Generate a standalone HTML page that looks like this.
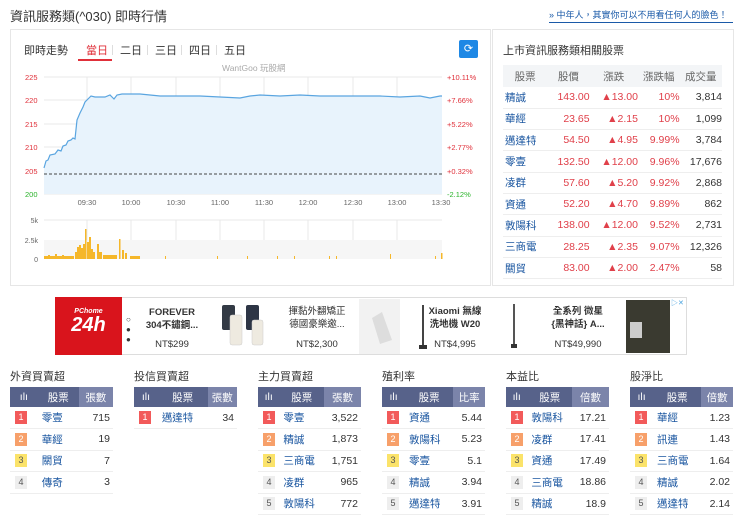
<!DOCTYPE html>
<html><head><meta charset="utf-8">
<style>
*{margin:0;padding:0;box-sizing:border-box}
body{width:740px;height:520px;background:#fff;font-family:"Liberation Sans","Noto Sans CJK TC",sans-serif;color:#333;position:relative;overflow:hidden;font-size:11px}
.abs{position:absolute}
.title{left:10px;top:6px;font-size:13px;color:#333}
.link{left:549px;top:8px;font-size:9px;color:#1a5aa8;border-bottom:1px solid #1a5aa8;padding-bottom:1px;white-space:nowrap;width:184px}
.box{border:1px solid #e6e6e6}
.tab{top:42px;font-size:11px;color:#333}
table{border-collapse:collapse}
.rt{left:503px;top:65px;width:219px;font-size:10.5px}
.rt th{background:#f3f5f7;color:#666;font-weight:normal;height:22px;text-align:center}
.rt td{height:21.3px;border-bottom:1px solid #eee;color:#e0404a;text-align:right}
.rt td:first-child{color:#1a56a0;text-align:left;padding-left:2px}
.rt td:last-child{color:#333}
.bt{width:103px;font-size:10.5px}
.bt th{background:#57628a;color:#fff;font-weight:normal;height:20px}
.bt th.l{background:#7b84aa}
.bt td{height:21.5px;border-bottom:1px solid #eee}
.bt td.n{color:#1a56a0;padding-left:4px}
.bt td.v{text-align:right;padding-right:3px}
.bg{display:inline-block;width:12px;height:13px;line-height:13px;text-align:center;color:#fff;font-size:9px;margin-left:5px}
.b1{background:#f25a5a}.b2{background:#f7a06a}.b3{background:#fbe36a;color:#555}.b4{background:#eee;color:#555}
.st{font-size:11px;color:#333}
</style></head><body>
<div class="abs title">資訊服務類(^030) 即時行情</div>
<div class="abs link">» 中年人，其實你可以不用看任何人的臉色！</div>

<div class="abs box" style="left:10px;top:29px;width:481px;height:257px"></div>
<div class="abs box" style="left:492px;top:29px;width:242px;height:257px"></div>

<div class="abs tab" style="left:24px">即時走勢</div>
<div class="abs tab" style="left:86px;color:#e0303a">當日</div>
<div class="abs" style="left:78px;top:59px;width:34px;height:2px;background:#e0303a"></div>
<div class="abs tab" style="left:120px">二日</div>
<div class="abs tab" style="left:155px">三日</div>
<div class="abs tab" style="left:189px">四日</div>
<div class="abs tab" style="left:224px">五日</div>
<div class="abs" style="left:112px;top:45px;width:1px;height:10px;background:#ddd"></div>
<div class="abs" style="left:147px;top:45px;width:1px;height:10px;background:#ddd"></div>
<div class="abs" style="left:181px;top:45px;width:1px;height:10px;background:#ddd"></div>
<div class="abs" style="left:216px;top:45px;width:1px;height:10px;background:#ddd"></div>
<div class="abs" style="left:459px;top:40px;width:19px;height:18px;background:#1e88e5;border-radius:2px;color:#fff;font-size:11px;text-align:center;line-height:18px">⟳</div>
<div class="abs" style="left:222px;top:62px;font-size:8.5px;color:#aaa">WantGoo 玩股網</div>

<svg class="abs" style="left:0;top:0" width="490" height="285">
<g stroke="#e8e8e8" stroke-width="1">
<line x1="44" y1="77" x2="442" y2="77"/><line x1="44" y1="100" x2="442" y2="100"/><line x1="44" y1="124" x2="442" y2="124"/><line x1="44" y1="147" x2="442" y2="147"/><line x1="44" y1="171" x2="442" y2="171"/><line x1="44" y1="194" x2="442" y2="194"/>
<line x1="87" y1="77" x2="87" y2="194"/><line x1="131" y1="77" x2="131" y2="194"/><line x1="176" y1="77" x2="176" y2="194"/><line x1="220" y1="77" x2="220" y2="194"/><line x1="264" y1="77" x2="264" y2="194"/><line x1="308" y1="77" x2="308" y2="194"/><line x1="353" y1="77" x2="353" y2="194"/><line x1="397" y1="77" x2="397" y2="194"/>
<line x1="87" y1="220" x2="87" y2="259"/><line x1="131" y1="220" x2="131" y2="259"/><line x1="176" y1="220" x2="176" y2="259"/><line x1="220" y1="220" x2="220" y2="259"/><line x1="264" y1="220" x2="264" y2="259"/><line x1="308" y1="220" x2="308" y2="259"/><line x1="353" y1="220" x2="353" y2="259"/><line x1="397" y1="220" x2="397" y2="259"/>
<line x1="44" y1="220" x2="442" y2="220"/>
</g>
<rect x="44" y="240" width="398" height="19" fill="#f6f6f6"/>
<path d="M44,168 L46,161 48,160 50,155 55,154 58,150 61,151 63,146 66,145 68,141 71,140 73,138 75,139 77,120 80,113 83,107 85,102 88,99 91,96 95,97 100,97 105,97 110,95 114,99 117,95 122,94 130,94 140,94 150,95 160,96 180,96 200,96 220,97 240,98 250,96 260,95 280,96 300,95 320,96 340,96 360,96 380,96 400,97 420,96 430,98 440,96 L442,96 L442,194 L44,194 Z" fill="#e8f3fc"/>
<path d="M44,168 L46,161 48,160 50,155 55,154 58,150 61,151 63,146 66,145 68,141 71,140 73,138 75,139 77,120 80,113 83,107 85,102 88,99 91,96 95,97 100,97 105,97 110,95 114,99 117,95 122,94 130,94 140,94 150,95 160,96 180,96 200,96 220,97 240,98 250,96 260,95 280,96 300,95 320,96 340,96 360,96 380,96 400,97 420,96 430,98 440,96 442,96" fill="none" stroke="#5aa5e0" stroke-width="1.2"/>
<line x1="44" y1="174" x2="442" y2="174" stroke="#444" stroke-dasharray="3,2"/>
<g fill="#f5b72a">
<rect x="44" y="256" width="30" height="3"/><rect x="48" y="255" width="2" height="4"/><rect x="55" y="254" width="2" height="5"/><rect x="62" y="255" width="2" height="4"/>
<rect x="75" y="252" width="2" height="7"/><rect x="77" y="247" width="2" height="12"/><rect x="79" y="245" width="2" height="14"/><rect x="81" y="248" width="2" height="11"/><rect x="83" y="244" width="2" height="15"/><rect x="85" y="229" width="1.5" height="30"/><rect x="87" y="242" width="2" height="17"/><rect x="89" y="237" width="2" height="22"/><rect x="91" y="249" width="2" height="10"/><rect x="93" y="252" width="2" height="7"/><rect x="97" y="244" width="2" height="15"/><rect x="99" y="252" width="3" height="7"/><rect x="103" y="255" width="14" height="4"/><rect x="119" y="239" width="1.5" height="20"/><rect x="122" y="250" width="2" height="9"/><rect x="125" y="253" width="2" height="6"/><rect x="130" y="256" width="10" height="3"/>
<rect x="165" y="256" width="1" height="3"/><rect x="217" y="256" width="1" height="3"/><rect x="247" y="256" width="1" height="3"/><rect x="277" y="256" width="1" height="3"/><rect x="294" y="256" width="1" height="3"/><rect x="329" y="256" width="1" height="3"/><rect x="336" y="256" width="1" height="3"/><rect x="390" y="254" width="1" height="5"/><rect x="435" y="256" width="1" height="3"/><rect x="441" y="253" width="1.5" height="6"/>
</g>
<g font-size="7.5" fill="#e0303a" font-family="Liberation Sans,sans-serif">
<text x="25" y="80">225</text><text x="25" y="103">220</text><text x="25" y="127">215</text><text x="25" y="150">210</text><text x="25" y="174">205</text>
<text x="447" y="80">+10.11%</text><text x="447" y="103">+7.66%</text><text x="447" y="127">+5.22%</text><text x="447" y="150">+2.77%</text><text x="447" y="174">+0.32%</text>
</g>
<text x="25" y="197" font-size="7.5" fill="#2bb32b">200</text><text x="447" y="197" font-size="7.5" fill="#2bb32b">-2.12%</text>
<g font-size="7.5" fill="#666" text-anchor="middle">
<text x="87" y="205">09:30</text><text x="131" y="205">10:00</text><text x="176" y="205">10:30</text><text x="220" y="205">11:00</text><text x="264" y="205">11:30</text><text x="308" y="205">12:00</text><text x="353" y="205">12:30</text><text x="397" y="205">13:00</text><text x="441" y="205">13:30</text>
</g>
<g font-size="7" fill="#666" text-anchor="end">
<text x="38" y="223">5k</text><text x="38" y="243">2.5k</text><text x="38" y="262">0</text>
</g>
</svg>

<div class="abs" style="left:503px;top:42px;font-size:11px">上市資訊服務類相關股票</div>
<table class="abs rt">
<tr><th>股票</th><th>股價</th><th>漲跌</th><th>漲跌幅</th><th>成交量</th></tr>
<tr><td>精誠</td><td>143.00</td><td>▲13.00</td><td>10%</td><td>3,814</td></tr>
<tr><td>華經</td><td>23.65</td><td>▲2.15</td><td>10%</td><td>1,099</td></tr>
<tr><td>邁達特</td><td>54.50</td><td>▲4.95</td><td>9.99%</td><td>3,784</td></tr>
<tr><td>零壹</td><td>132.50</td><td>▲12.00</td><td>9.96%</td><td>17,676</td></tr>
<tr><td>凌群</td><td>57.60</td><td>▲5.20</td><td>9.92%</td><td>2,868</td></tr>
<tr><td>資通</td><td>52.20</td><td>▲4.70</td><td>9.89%</td><td>862</td></tr>
<tr><td>敦陽科</td><td>138.00</td><td>▲12.00</td><td>9.52%</td><td>2,731</td></tr>
<tr><td>三商電</td><td>28.25</td><td>▲2.35</td><td>9.07%</td><td>12,326</td></tr>
<tr><td>關貿</td><td>83.00</td><td>▲2.00</td><td>2.47%</td><td>58</td></tr>
</table>

<!-- ad -->
<div class="abs" style="left:55px;top:297px;width:632px;height:58px;border:1px solid #ddd;background:#fff"></div>
<div class="abs" style="left:55px;top:297px;width:67px;height:58px;background:#d9141c;color:#fff;text-align:center">
<div style="font-size:7px;font-weight:bold;margin-top:11px;font-style:italic">PChome</div>
<div style="font-size:20px;font-weight:bold;font-style:italic;line-height:20px">24h</div></div>
<div class="abs" style="left:126px;top:315px;font-size:8px;line-height:10px">○<br>●<br>●</div>
<div class="abs" style="left:137px;top:306px;width:70px;text-align:center;font-size:9.5px;font-weight:bold;line-height:13px">FOREVER<br>304不鏽鋼...</div>
<div class="abs" style="left:137px;top:339px;width:70px;text-align:center;font-size:9.5px">NT$299</div>
<svg class="abs" style="left:0;top:0" width="740" height="360">
<rect x="222" y="305" width="13" height="25" rx="2" fill="#333a45"/><rect x="246" y="305" width="13" height="25" rx="2" fill="#2d3545"/>
<rect x="230" y="315" width="12" height="30" rx="2" fill="#eeeae0" stroke="#ccc" stroke-width=".5"/><rect x="252" y="320" width="11" height="25" rx="2" fill="#eeeae0" stroke="#ccc" stroke-width=".5"/>
<rect x="359" y="299" width="41" height="55" fill="#f2f2f2"/><path d="M372,318 L382,312 392,340 L380,344 Z" fill="#ddd"/>
<rect x="422" y="305" width="2" height="42" fill="#444"/><rect x="419" y="345" width="8" height="4" fill="#333"/>
<rect x="513" y="304" width="2" height="42" fill="#555"/><rect x="511" y="344" width="6" height="4" fill="#333"/>
<rect x="626" y="300" width="44" height="53" fill="#3a3a30"/><rect x="630" y="322" width="12" height="16" fill="#ccc"/>
<text x="671" y="305" font-size="7" fill="#4aa3df">▷✕</text>
</svg>
<div class="abs" style="left:277px;top:305px;width:80px;text-align:center;font-size:9.5px;line-height:13px">揮黏外翻矯正<br>德國豪樂邀...</div>
<div class="abs" style="left:277px;top:339px;width:80px;text-align:center;font-size:9.5px">NT$2,300</div>
<div class="abs" style="left:415px;top:305px;width:80px;text-align:center;font-size:9.5px;font-weight:bold;line-height:13px">Xiaomi 無線<br>洗地機 W20</div>
<div class="abs" style="left:415px;top:339px;width:80px;text-align:center;font-size:9.5px">NT$4,995</div>
<div class="abs" style="left:538px;top:305px;width:80px;text-align:center;font-size:9.5px;font-weight:bold;line-height:13px">全系列 微星<br>{黑神話} A...</div>
<div class="abs" style="left:538px;top:339px;width:80px;text-align:center;font-size:9.5px">NT$49,990</div>

<!-- bottom tables -->
<div class="abs st" style="left:10px;top:368px">外資買賣超</div>
<table class="abs bt" style="left:10px;top:387px"><tr><th>ılı</th><th>股票</th><th class="l">張數</th></tr>
<tr><td><span class="bg b1">1</span></td><td class="n">零壹</td><td class="v">715</td></tr>
<tr><td><span class="bg b2">2</span></td><td class="n">華經</td><td class="v">19</td></tr>
<tr><td><span class="bg b3">3</span></td><td class="n">關貿</td><td class="v">7</td></tr>
<tr><td><span class="bg b4">4</span></td><td class="n">傳奇</td><td class="v">3</td></tr></table>

<div class="abs st" style="left:134px;top:368px">投信買賣超</div>
<table class="abs bt" style="left:134px;top:387px"><tr><th>ılı</th><th>股票</th><th class="l">張數</th></tr>
<tr><td><span class="bg b1">1</span></td><td class="n">邁達特</td><td class="v">34</td></tr></table>

<div class="abs st" style="left:258px;top:368px">主力買賣超</div>
<table class="abs bt" style="left:258px;top:387px"><tr><th>ılı</th><th>股票</th><th class="l">張數</th></tr>
<tr><td><span class="bg b1">1</span></td><td class="n">零壹</td><td class="v">3,522</td></tr>
<tr><td><span class="bg b2">2</span></td><td class="n">精誠</td><td class="v">1,873</td></tr>
<tr><td><span class="bg b3">3</span></td><td class="n">三商電</td><td class="v">1,751</td></tr>
<tr><td><span class="bg b4">4</span></td><td class="n">凌群</td><td class="v">965</td></tr>
<tr><td><span class="bg b4">5</span></td><td class="n">敦陽科</td><td class="v">772</td></tr></table>

<div class="abs st" style="left:382px;top:368px">殖利率</div>
<table class="abs bt" style="left:382px;top:387px"><tr><th>ılı</th><th>股票</th><th class="l">比率</th></tr>
<tr><td><span class="bg b1">1</span></td><td class="n">資通</td><td class="v">5.44</td></tr>
<tr><td><span class="bg b2">2</span></td><td class="n">敦陽科</td><td class="v">5.23</td></tr>
<tr><td><span class="bg b3">3</span></td><td class="n">零壹</td><td class="v">5.1</td></tr>
<tr><td><span class="bg b4">4</span></td><td class="n">精誠</td><td class="v">3.94</td></tr>
<tr><td><span class="bg b4">5</span></td><td class="n">邁達特</td><td class="v">3.91</td></tr></table>

<div class="abs st" style="left:506px;top:368px">本益比</div>
<table class="abs bt" style="left:506px;top:387px"><tr><th>ılı</th><th>股票</th><th class="l">倍數</th></tr>
<tr><td><span class="bg b1">1</span></td><td class="n">敦陽科</td><td class="v">17.21</td></tr>
<tr><td><span class="bg b2">2</span></td><td class="n">凌群</td><td class="v">17.41</td></tr>
<tr><td><span class="bg b3">3</span></td><td class="n">資通</td><td class="v">17.49</td></tr>
<tr><td><span class="bg b4">4</span></td><td class="n">三商電</td><td class="v">18.86</td></tr>
<tr><td><span class="bg b4">5</span></td><td class="n">精誠</td><td class="v">18.9</td></tr></table>

<div class="abs st" style="left:630px;top:368px">股淨比</div>
<table class="abs bt" style="left:630px;top:387px"><tr><th>ılı</th><th>股票</th><th class="l">倍數</th></tr>
<tr><td><span class="bg b1">1</span></td><td class="n">華經</td><td class="v">1.23</td></tr>
<tr><td><span class="bg b2">2</span></td><td class="n">訊連</td><td class="v">1.43</td></tr>
<tr><td><span class="bg b3">3</span></td><td class="n">三商電</td><td class="v">1.64</td></tr>
<tr><td><span class="bg b4">4</span></td><td class="n">精誠</td><td class="v">2.02</td></tr>
<tr><td><span class="bg b4">5</span></td><td class="n">邁達特</td><td class="v">2.14</td></tr></table>
</body></html>
